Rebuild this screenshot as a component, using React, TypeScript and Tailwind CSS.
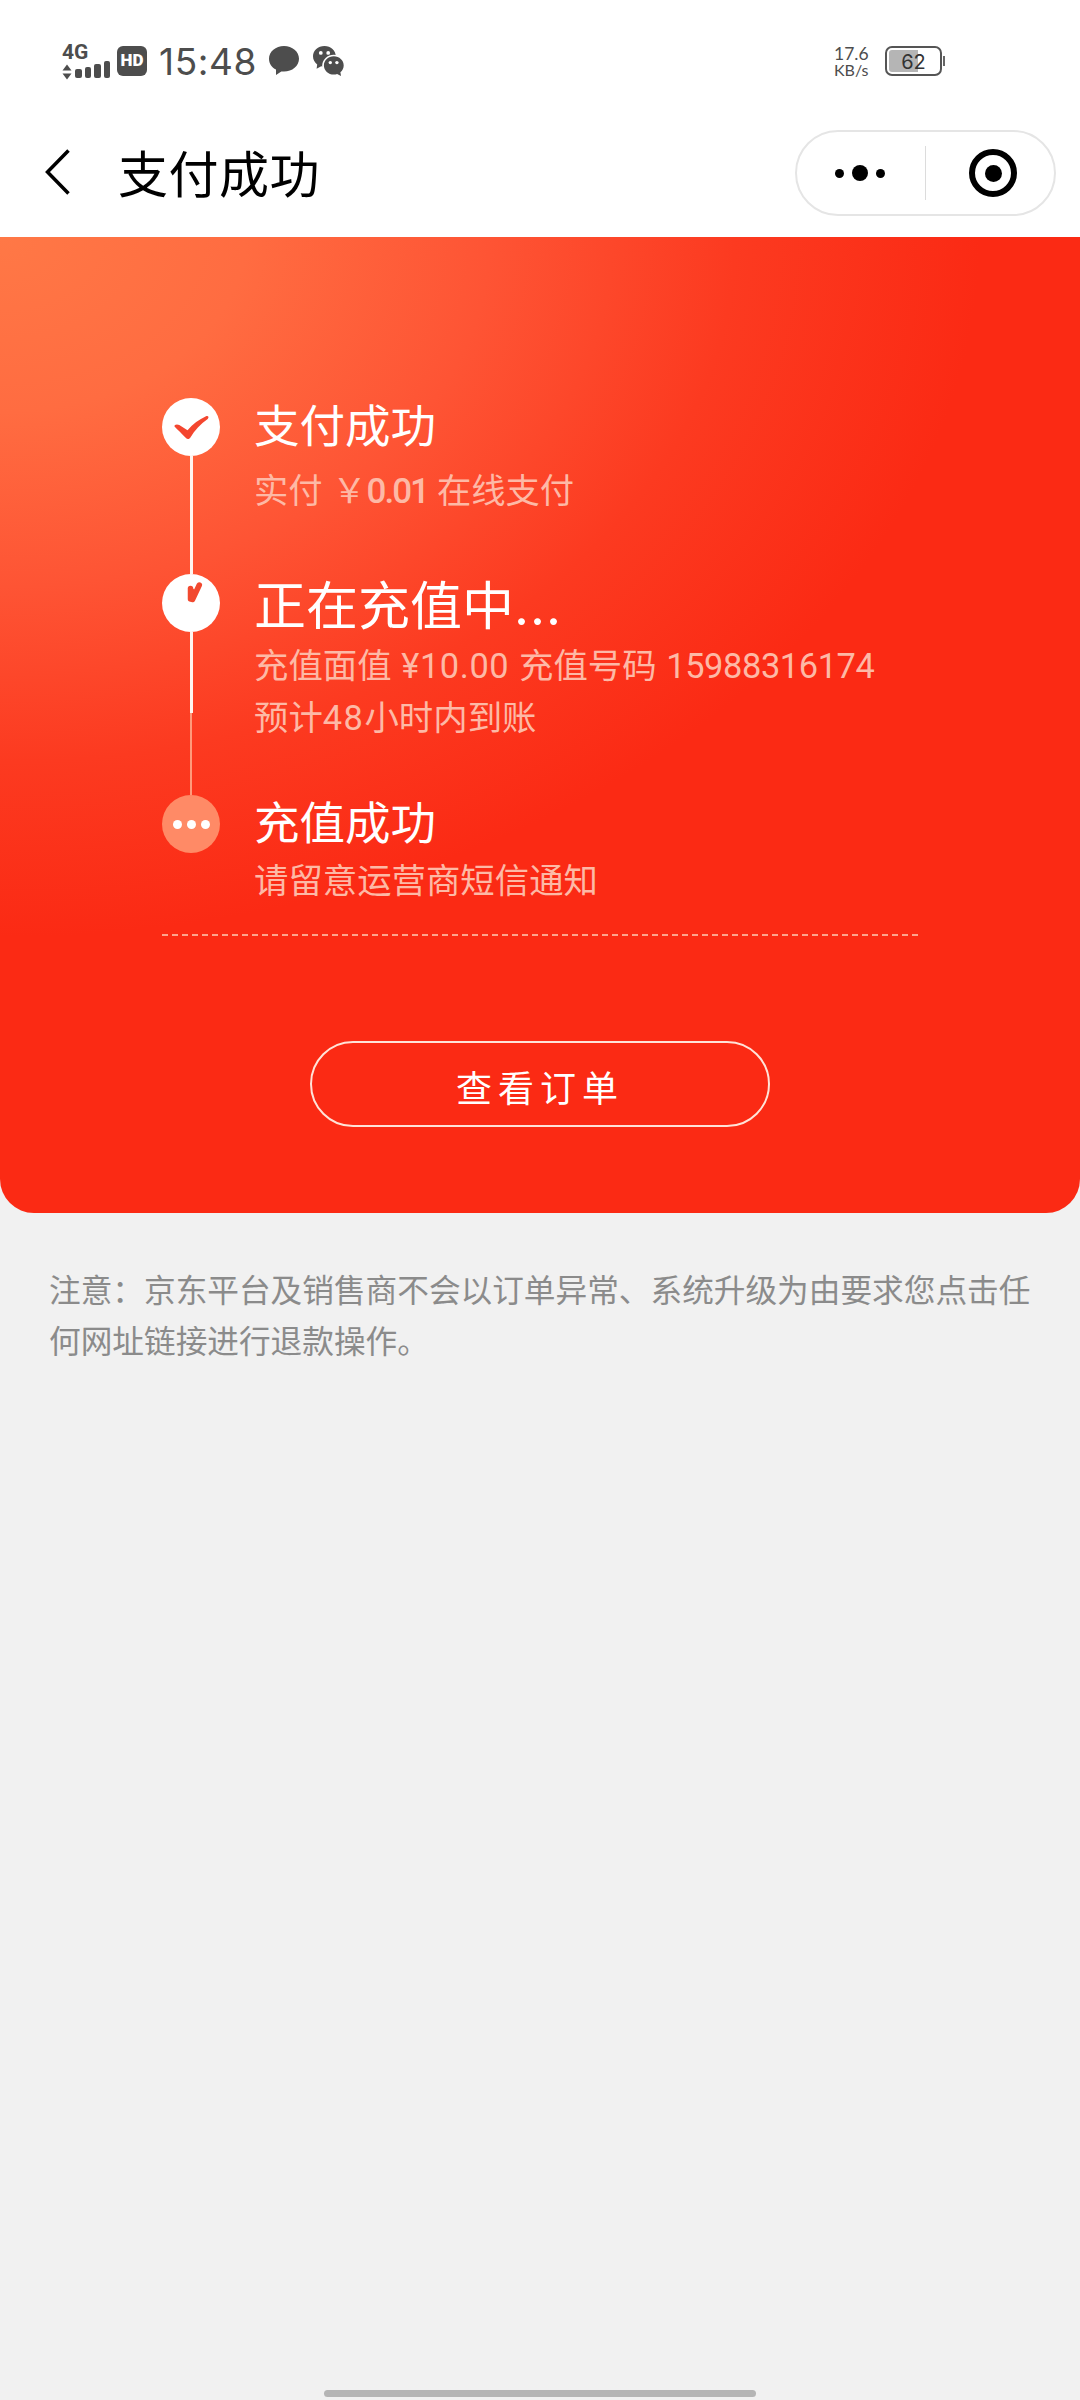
import type { ReactNode } from "react";

const signalBars = ["h-[9px]", "h-[11px]", "h-[14px]", "h-[17px]"];

function StatusBar() {
  return (
    <div className="flex h-[122px] items-start pt-[44px] pl-[62px] text-[#4d4d4d]">
      <div className="flex w-[49px] flex-col">
        <span className="font-[Roboto] text-[21px] leading-[16px] font-bold">4G</span>
        <div className="mt-[1px] flex items-end gap-[3px]">
          <svg className="h-[16px] w-[10px]" viewBox="0 0 10 16" fill="currentColor">
            <path d="M5 0.5 9.5 6.5H0.5Z" />
            <path d="M0.5 9.5H9.5L5 15.5Z" />
          </svg>
          {signalBars.map((height) => (
            <span className={`mb-[2px] w-[6.5px] rounded-[2px] bg-[#4d4d4d] ${height}`} key={height} />
          ))}
        </div>
      </div>
      <div className="mt-[2px] ml-[6px] flex size-[30px] items-center justify-center rounded-[6px] bg-[#4d4d4d] font-[Roboto] text-[17px] font-black text-white">
        HD
      </div>
      <span className="ml-[12px] w-[98px] text-[37px] leading-[35px] tracking-[0.600px] whitespace-nowrap">15:48</span>
      <svg className="mt-[2px] ml-[12px] h-[30px] w-[30px]" viewBox="0 0 30 30" fill="currentColor">
        <path d="M15 0C6.700 0 0 5.500 0 12.800c0 4.700 2.800 8.700 7 10.800v5.400l5.300-3.600c.9.100 1.800.2 2.700.2 8.300 0 15-5.600 15-12.800S23.300 0 15 0Z" />
      </svg>
      <svg className="mt-[2px] ml-[14px] h-[30px] w-[32px]" viewBox="0 0 32 30">
        <path
          d="M11.500 0C5 0 0 4.500 0 10.300c0 3.300 1.600 6.200 4.200 8.100L3.600 22.800l4.600-2.600c1 .3 2.100.4 3.300.4 6.300 0 11.300-4.500 11.300-10.300S17.800 0 11.500 0Z"
          fill="#4d4d4d"
        />
        <ellipse cx="20.800" cy="19.500" rx="11.600" ry="10.700" fill="#fff" />
        <path
          d="M20.800 10.200c5.500 0 9.900 4.100 9.900 9.200 0 2.700-1.300 5.200-3.300 6.900l.6 3.600-3.900-1.900c-1 .4-2.100.5-3.300.5-5.500 0-9.900-4.100-9.900-9.100s4.400-9.200 9.900-9.200Z"
          fill="#4d4d4d"
        />
        <g fill="#fff">
          <circle cx="7.800" cy="6.900" r="1.900" />
          <circle cx="15.200" cy="6.900" r="1.900" />
          <circle cx="17.300" cy="16.600" r="1.700" />
          <circle cx="23.900" cy="16.600" r="1.700" />
        </g>
      </svg>
      <div className="mt-[2px] ml-[489px] flex w-[40px] flex-col font-[Lato] text-[17.5px] leading-[16px]">
        <span>17.6</span>
        <span className="text-[16px]">KB/s</span>
      </div>
      <div className="mt-[2px] ml-[11px] flex items-center">
        <div className="relative flex h-[30px] w-[57px] items-center justify-center rounded-[7px] border-[2.500px] border-[#555] text-[20px] text-[#333]">
          <span className="absolute top-[2px] left-[2px] h-[22px] w-[29px] rounded-l-[3px] bg-[#b5b5b5]" />
          <span className="relative mt-[1px]">62</span>
        </div>
        <span className="ml-[1px] h-[10px] w-[2px] bg-[#666]" />
      </div>
    </div>
  );
}

function NavBar() {
  return (
    <div className="flex h-[115px] items-start pl-[44px]">
      <svg className="mt-[27px] h-[46px] w-[26px]" viewBox="0 0 26 46" fill="none" stroke="#000" strokeWidth="3.500">
        <path d="M24.500 1.500 3.500 23 24.500 44.500" />
      </svg>
      <h1 className="mt-[23px] ml-[48px] w-[210px] text-[50px] leading-[60px] tracking-[0.500px] text-black">支付成功</h1>
      <div className="mt-[8px] ml-[467px] flex h-[86px] w-[261px] items-center rounded-full border-2 border-[#e5e5e5]">
        <div className="flex w-[128px] items-center justify-center gap-[8px] pr-[2px]">
          <span className="size-[9px] rounded-full bg-black" />
          <span className="size-[16px] rounded-full bg-black" />
          <span className="size-[9px] rounded-full bg-black" />
        </div>
        <span className="h-[54px] w-px bg-[#dcdcdc]" />
        <div className="ml-[43px] flex size-[48px] items-center justify-center rounded-full border-6 border-black">
          <span className="size-[17px] rounded-full bg-black" />
        </div>
      </div>
    </div>
  );
}

function StepDot({ className, children }: { className: string; children: ReactNode }) {
  return (
    <div className={`flex size-[58px] shrink-0 items-center justify-center rounded-full ${className}`}>{children}</div>
  );
}

function StepRail() {
  return (
    <div className="flex w-[58px] flex-col items-center">
      <StepDot className="bg-white">
        <svg className="h-[58px] w-[58px]" viewBox="0 0 58 58" fill="#f4462f">
          <path d="M12.500 28.500c-.5-1.800 2.300-2.800 4.800-1.500l8.200 5.300c5.500-6.300 11.500-10.800 18.500-14 2.300-.8 3.400 1 1.700 2.600-7.300 5-13 11.400-17.300 18.600-1.200 1.900-3.200 2-4.700.2C19.500 35.500 16 32 12.500 28.500Z" />
        </svg>
      </StepDot>
      <span className="h-[118px] w-[3px] bg-[#fff5f0]" />
      <StepDot className="bg-white">
        {/* clock hands */}
        <svg className="h-[58px] w-[58px]" viewBox="0 0 58 58" fill="none" stroke="#f2492f" strokeLinecap="round">
          <path d="M28.500 14.500V25" strokeWidth="5.500" />
          <path d="M37.300 11 30.500 25.500" strokeWidth="5.500" />
          <path d="M30 17V24" strokeWidth="5" />
        </svg>
      </StepDot>
      <span className="h-[81px] w-[3px] bg-[#fff5f0]" />
      <span className="h-[82px] w-[2px] bg-[#ff9a7b]" />
      <StepDot className="gap-[5px] bg-[#ff8a66]">
        <span className="size-[9px] rounded-full bg-white" />
        <span className="size-[9px] rounded-full bg-white" />
        <span className="size-[9px] rounded-full bg-white" />
      </StepDot>
    </div>
  );
}

function ResultCard() {
  return (
    <section className="flex h-[976px] flex-col rounded-b-[34px] bg-[#fb2a14] bg-[radial-gradient(ellipse_980px_700px_at_0_0,#ff7846_0%,#ff6c41_25%,#fe5434_50%,#fc3a20_75%,#fb2a14_100%)] px-[162px] pt-[161px]">
      <div className="flex h-[536px]">
        <StepRail />
        <div className="ml-[34px] flex flex-col whitespace-nowrap text-[#fdb9a6]">
          <h2 className="text-[45.500px] leading-[58px] text-white">支付成功</h2>
          <p className="mt-[11px] h-[48px] text-[34.300px] leading-[48px]">
            实付 <span>￥</span>
            <span className="font-[Roboto] text-[35px] font-medium tracking-[-2px]">0.01</span>
            <span className="ml-[9px]">在线支付</span>
          </p>
          <h2 className="mt-[62px] text-[52px] leading-[60px] text-white">
            正在充值中<span className="tracking-[1px]">...</span>
          </h2>
          <p className="mt-[3px] text-[34.400px] leading-[52px]">
            充值面值 <span className="font-[Roboto] tracking-[0.600px]">¥10.00</span> 充值号码{" "}
            <span className="font-[Roboto] tracking-[-0.400px]">15988316174</span>
          </p>
          <p className="text-[34.400px] leading-[52px]">
            预计<span className="font-[Roboto] tracking-[1.500px]">48</span>小时内到账
          </p>
          <h2 className="mt-[51px] text-[45.500px] leading-[58px] text-white">充值成功</h2>
          <p className="mt-[4px] text-[34.400px] leading-[48px]">请留意运营商短信通知</p>
        </div>
      </div>
      <div className="h-[2px] bg-[repeating-linear-gradient(90deg,#fda48e_0px,#fda48e_6px,transparent_6px,transparent_10px)]" />
      <button className="mt-[105px] h-[86px] w-[460px] self-center rounded-full border-2 border-[#ffe3d8] pt-[9px] text-[36px] tracking-[6px] text-white">
        查看订单
      </button>
    </section>
  );
}

export default function App() {
  return (
    <main className="flex h-[2400px] w-[1080px] flex-col overflow-hidden bg-[#f1f1f1] font-[Inter,'Noto_Sans_CJK_SC',sans-serif]">
      <header className="bg-white">
        <StatusBar />
        <NavBar />
      </header>
      <ResultCard />
      <p className="mt-[52px] ml-[49px] w-[1000px] text-[31.670px] leading-[51px] text-[#8b8b8b]">
        注意：京东平台及销售商不会以订单异常、系统升级为由要求您点击任
        <br />
        何网址链接进行退款操作。
      </p>
      <div className="mt-auto mb-[3px] h-[7px] w-[432px] self-center rounded-full bg-[#b5b5b5]" />
    </main>
  );
}
